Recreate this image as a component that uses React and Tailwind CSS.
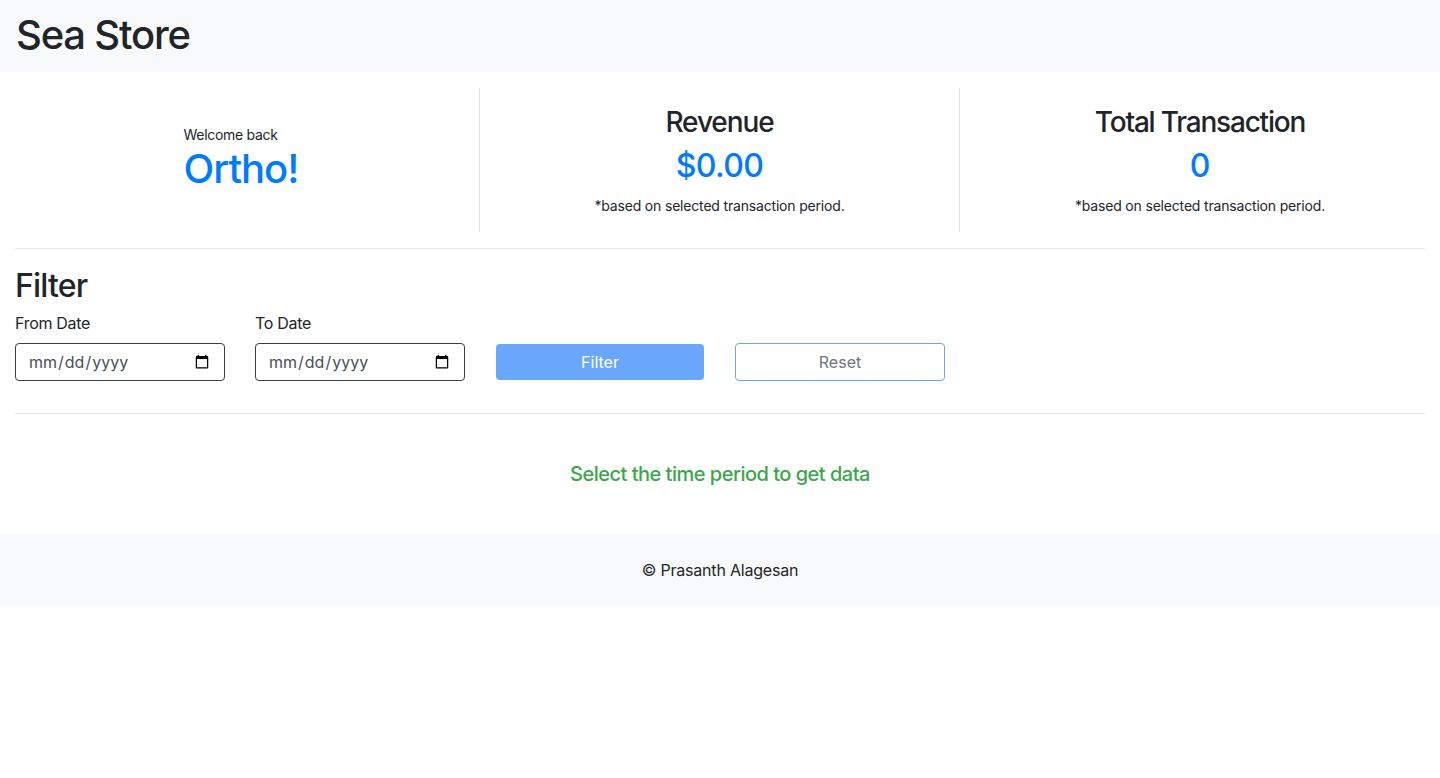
export default function App() {
  return (
    <div className="min-h-[778px] bg-white text-[#212529]" style={{ fontFamily: 'Inter, "Liberation Sans", sans-serif' }}>
      <header className="h-[72px] bg-[#f8f9fa] flex items-center px-4">
        <h1 className="text-[40px] leading-[48px] font-medium tracking-[-1.2px] -mt-[2px]">Sea Store</h1>
      </header>

      <main className="px-[15px]">
        <div className="grid grid-cols-3 -mx-[15px] mt-4">
          <div className="border-r border-[#dee2e6] flex items-center justify-center h-[144px]">
            <div className="text-left -mt-[4px] pl-[3px]">
              <div className="text-[14px] leading-[21px] tracking-[-0.3px]">Welcome back</div>
              <div className="text-[40px] leading-[48px] font-medium tracking-[-1px] text-[#007bff]">Ortho!</div>
            </div>
          </div>
          <div className="border-r border-[#dee2e6] flex flex-col items-center pt-4 h-[144px]">
            <h3 className="text-[28px] leading-[34px] font-medium tracking-[-1.1px] mt-[1px]">Revenue</h3>
            <div className="mt-2 text-[32px] leading-[38px] font-medium tracking-[-0.6px] text-[#007bff]">$0.00</div>
            <div className="mt-[10px] text-[14px] leading-[21px] tracking-[-0.18px]">*based on selected transaction period.</div>
          </div>
          <div className="flex flex-col items-center pt-4 h-[144px]">
            <h3 className="text-[28px] leading-[34px] font-medium tracking-[-1.2px] mt-[1px]">Total Transaction</h3>
            <div className="mt-2 text-[32px] leading-[38px] font-medium text-[#007bff]">0</div>
            <div className="mt-[10px] text-[14px] leading-[21px] tracking-[-0.18px]">*based on selected transaction period.</div>
          </div>
        </div>

        <hr className="mt-4 border-t border-[#e3e3e3]" />

        <h2 className="mt-[18px] text-[32px] leading-[38px] font-medium tracking-[-0.8px]">Filter</h2>
        <div className="mt-[6px] grid grid-cols-6 -mx-[15px]">
          <div className="px-[15px]">
            <label className="block text-[16px] leading-[24px] tracking-[-0.3px]">From Date</label>
            <input type="date" className="mt-2 w-full h-[38px] border border-[#3a3f44] rounded-[4px] px-3 text-[16px] text-[#495057]" style={{ fontFamily: 'Inter, "Liberation Sans", sans-serif' }} />
          </div>
          <div className="px-[15px]">
            <label className="block text-[16px] leading-[24px] tracking-[-0.3px]">To Date</label>
            <input type="date" className="mt-2 w-full h-[38px] border border-[#3a3f44] rounded-[4px] px-3 text-[16px] text-[#495057]" style={{ fontFamily: 'Inter, "Liberation Sans", sans-serif' }} />
          </div>
          <div className="pl-4 pr-[16px] pt-[33px]">
            <button className="w-full h-[36px] rounded-[4px] bg-[#6aa7fb] text-white text-[16px]">Filter</button>
          </div>
          <div className="px-[15px] pt-[32px]">
            <button className="w-full h-[38px] rounded-[4px] border border-[#6aa7fb] bg-white text-[#6c757d] text-[16px]">Reset</button>
          </div>
        </div>

        <hr className="mt-8 border-t border-[#e3e3e3]" />

        <div className="py-[45px] text-center">
          <p className="text-[20px] leading-[30px] font-medium tracking-[-0.5px] text-[#3aa74a]">Select the time period to get data</p>
        </div>
      </main>

      <footer className="h-[72px] bg-[#f8f9fa] flex items-center justify-center text-[16px] tracking-[-0.2px]">
        © Prasanth Alagesan
      </footer>
    </div>
  );
}
